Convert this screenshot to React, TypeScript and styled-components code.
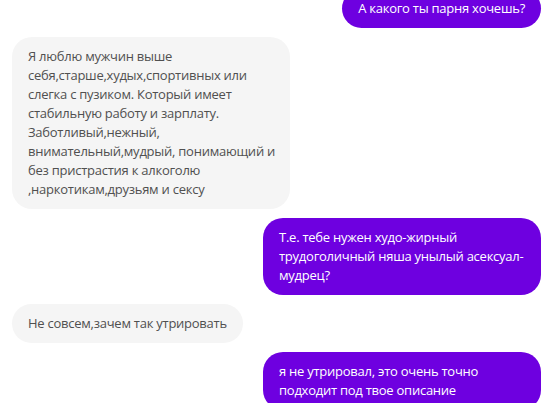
import * as React from 'react';
import styled, { createGlobalStyle } from 'styled-components';

const GlobalStyle = createGlobalStyle`
  html, body {
    margin: 0;
    padding: 0;
    background: #ffffff;
    overflow: hidden;
  }
  body {
    font-family: "Open Sans", "Noto Sans", sans-serif;
  }
`;

type Side = 'in' | 'out';

interface Message {
  side: Side;
  lines: string[];
}

const messages: Message[] = [
  { side: 'out', lines: ['А какого ты парня хочешь?'] },
  {
    side: 'in',
    lines: [
      'Я люблю мужчин выше',
      'себя,старше,худых,спортивных или',
      'слегка с пузиком. Который имеет',
      'стабильную работу и зарплату.',
      'Заботливый,нежный,',
      'внимательный,мудрый, понимающий и',
      'без пристрастия к алкоголю',
      ',наркотикам,друзьям и сексу',
    ],
  },
  {
    side: 'out',
    lines: [
      'Т.е. тебе нужен худо-жирный',
      'трудоголичный няша унылый асексуал-',
      'мудрец?',
    ],
  },
  { side: 'in', lines: ['Не совсем,зачем так утрировать'] },
  {
    side: 'out',
    lines: ['я не утрировал, это очень точно', 'подходит под твое описание'],
  },
];

// the list is scrolled a little, so the first bubble is cut at the top
const Feed = styled.div`
  display: flex;
  flex-direction: column;
  gap: 9px;
  margin-top: -11px;
  padding: 0 2px 0 12px;
`;

const Row = styled.div<{ $side: Side }>`
  display: flex;
  justify-content: ${p => (p.$side === 'out' ? 'flex-end' : 'flex-start')};
`;

// wrapped bubbles stretch to the max width, like the chat does
const Bubble = styled.div<{ $side: Side; $wrapped: boolean }>`
  box-sizing: border-box;
  width: ${p => (p.$wrapped ? '278px' : 'auto')};
  padding: 10px 16px;
  border-radius: 20px;
  font-size: 13px;
  letter-spacing: -0.25px;
  line-height: 19px;
  white-space: nowrap;
  background: ${p => (p.$side === 'out' ? '#6e00e0' : '#f5f5f5')};
  color: ${p => (p.$side === 'out' ? '#ffffff' : '#505050')};
`;

const Line = styled.div``;

export default function App() {
  return (
    <>
      <GlobalStyle />
      <Feed>
        {messages.map((m, i) => (
          <Row key={i} $side={m.side}>
            <Bubble $side={m.side} $wrapped={m.lines.length > 1}>
              {m.lines.map((l, j) => (
                <Line key={j}>{l}</Line>
              ))}
            </Bubble>
          </Row>
        ))}
      </Feed>
    </>
  );
}
